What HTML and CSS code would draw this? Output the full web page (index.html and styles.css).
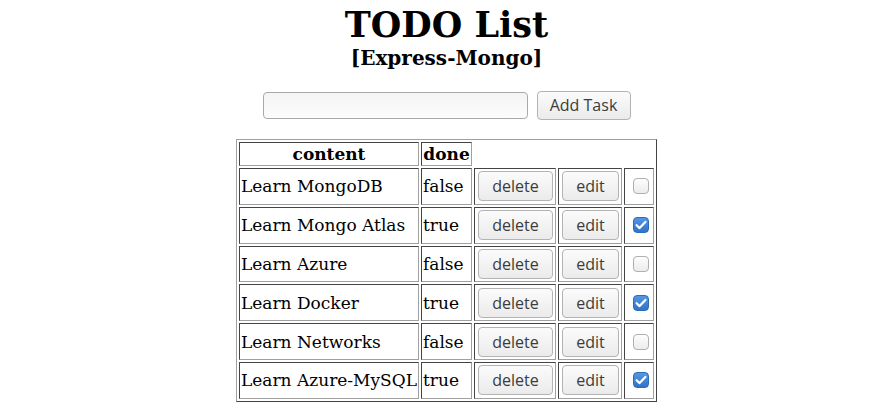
FILE: index.html
```html
<!DOCTYPE html>
<html>
<head>
<meta charset="utf-8">
<title>TODO List</title>
<link rel="stylesheet" href="styles.css">
</head>
<body>
<div class="page">
  <h1 class="title">TODO List</h1>
  <h2 class="subtitle">[Express-Mongo]</h2>
  <form class="add-form">
    <input class="task-input" type="text">
    <button class="btn btn-add" type="button">Add Task</button>
  </form>
  <table class="todo-table">
    <tr class="head-row">
      <th class="col-content">content</th>
      <th class="col-done">done</th>
    </tr>
    <tr>
      <td class="cell-text">Learn MongoDB</td>
      <td class="cell-text">false</td>
      <td class="cell-btn"><button class="btn btn-delete" type="button">delete</button></td>
      <td class="cell-btn"><button class="btn btn-edit" type="button">edit</button></td>
      <td class="cell-check"><span class="check"></span></td>
    </tr>
    <tr>
      <td class="cell-text">Learn Mongo Atlas</td>
      <td class="cell-text">true</td>
      <td class="cell-btn"><button class="btn btn-delete" type="button">delete</button></td>
      <td class="cell-btn"><button class="btn btn-edit" type="button">edit</button></td>
      <td class="cell-check"><span class="check checked"><svg viewBox="0 0 16 16" width="16" height="16"><path d="M3.6 8.2 L6.6 11.1 L12.4 4.9" fill="none" stroke="#fff" stroke-width="2.2" stroke-linecap="round" stroke-linejoin="round"/></svg></span></td>
    </tr>
    <tr>
      <td class="cell-text">Learn Azure</td>
      <td class="cell-text">false</td>
      <td class="cell-btn"><button class="btn btn-delete" type="button">delete</button></td>
      <td class="cell-btn"><button class="btn btn-edit" type="button">edit</button></td>
      <td class="cell-check"><span class="check"></span></td>
    </tr>
    <tr>
      <td class="cell-text">Learn Docker</td>
      <td class="cell-text">true</td>
      <td class="cell-btn"><button class="btn btn-delete" type="button">delete</button></td>
      <td class="cell-btn"><button class="btn btn-edit" type="button">edit</button></td>
      <td class="cell-check"><span class="check checked"><svg viewBox="0 0 16 16" width="16" height="16"><path d="M3.6 8.2 L6.6 11.1 L12.4 4.9" fill="none" stroke="#fff" stroke-width="2.2" stroke-linecap="round" stroke-linejoin="round"/></svg></span></td>
    </tr>
    <tr>
      <td class="cell-text">Learn Networks</td>
      <td class="cell-text">false</td>
      <td class="cell-btn"><button class="btn btn-delete" type="button">delete</button></td>
      <td class="cell-btn"><button class="btn btn-edit" type="button">edit</button></td>
      <td class="cell-check"><span class="check"></span></td>
    </tr>
    <tr>
      <td class="cell-text">Learn Azure-MySQL</td>
      <td class="cell-text">true</td>
      <td class="cell-btn"><button class="btn btn-delete" type="button">delete</button></td>
      <td class="cell-btn"><button class="btn btn-edit" type="button">edit</button></td>
      <td class="cell-check"><span class="check checked"><svg viewBox="0 0 16 16" width="16" height="16"><path d="M3.6 8.2 L6.6 11.1 L12.4 4.9" fill="none" stroke="#fff" stroke-width="2.2" stroke-linecap="round" stroke-linejoin="round"/></svg></span></td>
    </tr>
  </table>
</div>
</body>
</html>
```
FILE: styles.css
```css
html, body {
  margin: 0;
  padding: 0;
  background: #fff;
}
body {
  font-family: "DejaVu Serif", serif;
  color: #000;
}
.page {
  padding-left: 7px;
  display: flex;
  flex-direction: column;
  align-items: center;
}
.title {
  margin: 4px 0 0 0;
  font-size: 35px;
  line-height: 41px;
  font-weight: bold;
}
.subtitle {
  margin: 0;
  font-size: 20px;
  line-height: 26px;
  font-weight: bold;
}
.add-form {
  margin: 19px 0 0 0;
  display: flex;
  align-items: center;
  gap: 9px;
  height: 30px;
}
.task-input {
  box-sizing: border-box;
  width: 265px;
  height: 27px;
  margin: 0;
  border: 1px solid #a9a9a9;
  border-radius: 4px;
  background: linear-gradient(#f4f4f4, #fcfcfc);
}
.btn {
  box-sizing: border-box;
  font-family: "Open Sans", "DejaVu Sans", sans-serif;
  font-size: 16px;
  color: #3c3c3c;
  border: 1px solid #b3b3b3;
  border-radius: 4px;
  background: linear-gradient(#fbfbfb, #ebebeb);
  padding: 0;
  margin: 0;
}
.btn-add {
  width: 94px;
  height: 29px;
}
.todo-table {
  margin-top: 19px;
  border-collapse: separate;
  border-spacing: 2px;
  border: 1px solid;
  border-color: #a0a0a0 #444 #444 #a0a0a0;
}
.todo-table th,
.todo-table td {
  border: 1px solid;
  border-color: #444 #a0a0a0 #a0a0a0 #444;
  padding: 1px;
}
.todo-table th {
  font-size: 17px;
  line-height: 20px;
  font-weight: bold;
  height: 20px;
}
.col-content {
  width: 176px;
}
.col-done {
  width: 47px;
}
.cell-text {
  font-size: 17px;
  height: 32.8px;
  white-space: nowrap;
}
.cell-btn {
  vertical-align: middle;
}
.btn-delete {
  display: block;
  width: 75px;
  height: 30px;
  margin: 0 1px 0 2px;
}
.btn-edit {
  display: block;
  width: 57px;
  height: 30px;
  margin: 0 1px 0 2px;
}
.cell-check {
  width: 26px;
  vertical-align: middle;
}
.check {
  display: block;
  box-sizing: border-box;
  width: 16px;
  height: 16px;
  margin-left: 7px;
  border: 1px solid #b0b0b0;
  border-radius: 4px;
  background: linear-gradient(#fdfdfd, #ececec);
}
.check svg {
  display: block;
  margin: -1px;
}
.check.checked {
  border-color: #2c6bb8;
  background: linear-gradient(#5597e3, #2f74c8);
}
```
